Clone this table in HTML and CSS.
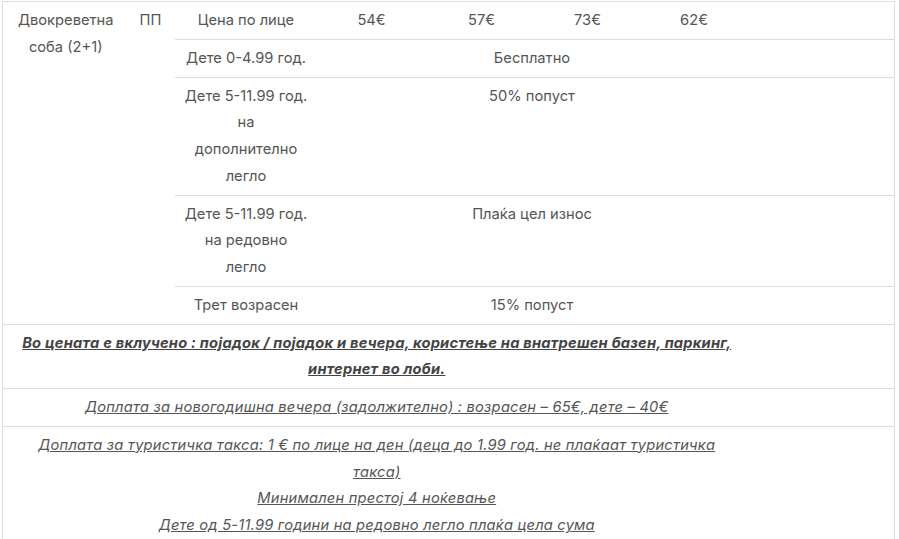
FILE: index.html
```html
<!DOCTYPE html>
<html lang="mk">
<head>
<meta charset="utf-8">
<title>Цени</title>
<link rel="stylesheet" href="styles.css">
</head>
<body>
<div class="wrap">
<table class="prices">
<colgroup>
<col class="c1"><col class="c2"><col class="c3"><col class="c4"><col class="c5"><col class="c6"><col class="c7"><col class="c8">
</colgroup>
<tbody>
<tr>
<td rowspan="5" class="room">Двокреветна соба (2+1)</td>
<td rowspan="5" class="board">ПП</td>
<td>Цена по лице</td>
<td>54€</td><td>57€</td><td>73€</td><td>62€</td><td></td>
</tr>
<tr>
<td>Дете 0-4.99 год.</td>
<td colspan="4" class="span">Бесплатно</td><td></td>
</tr>
<tr>
<td>Дете 5-11.99 год.<br>на<br>дополнително<br>легло</td>
<td colspan="4" class="span">50% попуст</td><td></td>
</tr>
<tr>
<td>Дете 5-11.99 год.<br>на редовно<br>легло</td>
<td colspan="4" class="span">Плаќа цел износ</td><td></td>
</tr>
<tr>
<td>Трет возрасен</td>
<td colspan="4" class="span">15% попуст</td><td></td>
</tr>
<tr class="note">
<td colspan="7"><strong><em><u>Во цената е вклучено : појадок / појадок и вечера, користење на внатрешен базен, паркинг,<br>интернет во лоби.</u></em></strong></td><td></td>
</tr>
<tr class="note">
<td colspan="7"><em><u>Доплата за новогодишна вечера (задолжително) : возрасен – 65€, дете – 40€</u></em></td><td></td>
</tr>
<tr class="note">
<td colspan="7"><em><u>Доплата за туристичка такса: 1 € по лице на ден (деца до 1.99 год. не плаќаат туристичка<br>такса)</u></em><br><em><u>Минимален престој 4 ноќевање</u></em><br><em><u>Дете од 5-11.99 години на редовно легло плаќа цела сума</u></em></td><td></td>
</tr>
</tbody>
</table>
</div>
</body>
</html>
```

FILE: styles.css
```css
html, body {
  margin: 0;
  padding: 0;
  background: #ffffff;
}

.wrap {
  padding: 1px 0 0 2px;
}

.prices {
  width: 893px;
  border-collapse: collapse;
  table-layout: fixed;
  border-left: 1px solid #dcdcdc;
  border-right: 1px solid #dcdcdc;
  font-family: Inter, "Noto Sans", sans-serif;
  font-size: 14.7px;
  line-height: 26.75px;
  color: #555555;
}

.c1 { width: 124px; }
.c2 { width: 48px; }
.c3 { width: 143px; }
.c4 { width: 108px; }
.c5 { width: 112px; }
.c6 { width: 100px; }
.c7 { width: 113px; }
.c8 { width: 144px; }

.prices td {
  border-top: 1px solid #dcdcdc;
  padding: 5px 6px 5px 6px;
  vertical-align: top;
  text-align: center;
}

.prices .room {
  padding-left: 8px;
}

.prices .span {
  padding-right: 10px;
}

.prices .note td {
  padding-left: 6px;
  padding-right: 6px;
}

.prices em {
  letter-spacing: 0.2px;
}

.prices strong {
  color: #444444;
}
```
